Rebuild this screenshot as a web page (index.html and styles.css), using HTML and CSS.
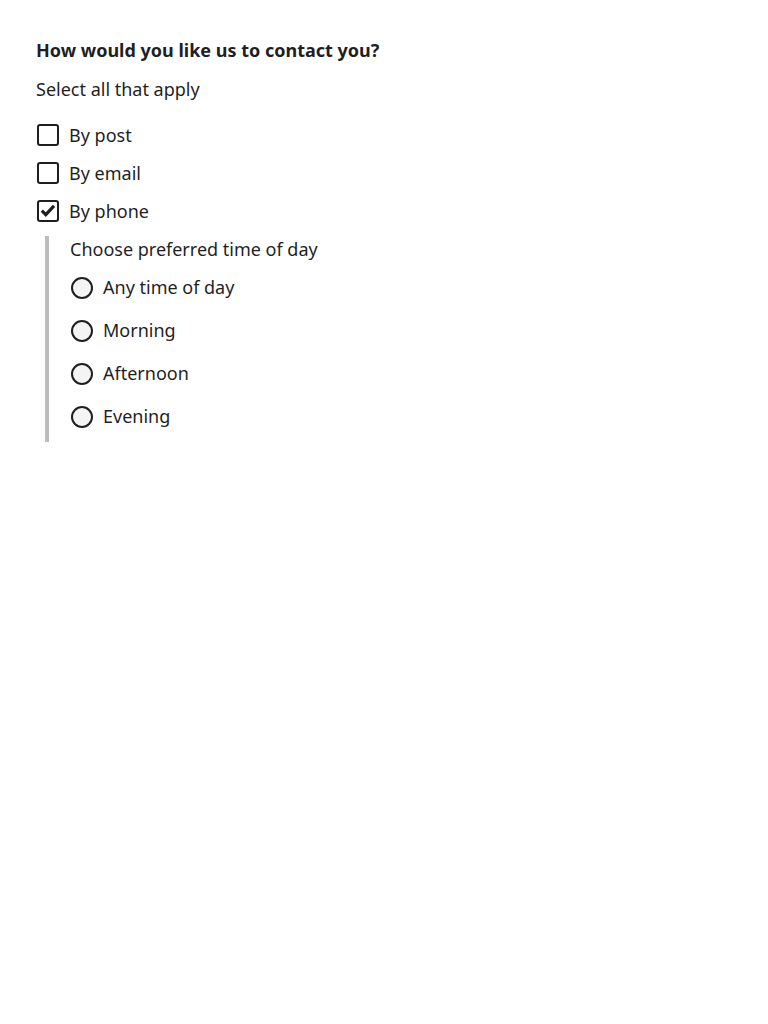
FILE: index.html
```html
<!DOCTYPE html>
<html lang="en">
<head>
<meta charset="utf-8">
<title>Contact preferences</title>
<link rel="stylesheet" href="styles.css">
</head>
<body>
<form class="form">
  <fieldset class="group">
    <legend class="title">How would you like us to contact you?</legend>
    <p class="hint">Select all that apply</p>
    <div class="options">
      <label class="option">
        <span class="box"></span>
        <span class="label">By post</span>
      </label>
      <label class="option">
        <span class="box"></span>
        <span class="label">By email</span>
      </label>
      <label class="option">
        <span class="box checked">
          <svg viewBox="0 0 22 22" width="22" height="22" aria-hidden="true"><path d="M4.8 10.6 L8.8 14.6 L17 5.8" fill="none" stroke="#1f1f1f" stroke-width="3.2" stroke-linecap="butt" stroke-linejoin="miter"/></svg>
        </span>
        <span class="label">By phone</span>
      </label>
    </div>
    <div class="nested">
      <p class="nested-title">Choose preferred time of day</p>
      <div class="radios">
        <label class="radio"><span class="circle"></span><span class="label">Any time of day</span></label>
        <label class="radio"><span class="circle"></span><span class="label">Morning</span></label>
        <label class="radio"><span class="circle"></span><span class="label">Afternoon</span></label>
        <label class="radio"><span class="circle"></span><span class="label">Evening</span></label>
      </div>
    </div>
  </fieldset>
</form>
</body>
</html>
```

FILE: styles.css
```css
html, body {
  margin: 0;
  background: #ffffff;
}

body {
  font-family: "Noto Sans", "Open Sans", sans-serif;
  color: #1f1f1f;
  font-size: 18px;
  line-height: 27px;
}

.form {
  padding: 37px 36px 36px;
}

.group {
  border: 0;
  margin: 0;
  padding: 0;
  min-width: 0;
}

.title {
  padding: 0;
  font-weight: 700;
  font-size: 18px;
  line-height: 27px;
}

.hint {
  margin: 12px 0 0;
}

.options {
  display: flex;
  flex-direction: column;
  margin-top: 13px;
}

.option {
  display: flex;
  align-items: center;
  gap: 10px;
  height: 38px;
  margin-left: 1px;
}

.box {
  box-sizing: border-box;
  width: 22px;
  height: 22px;
  border: 2px solid #1f1f1f;
  border-radius: 3px;
  display: flex;
  align-items: center;
  justify-content: center;
  flex-shrink: 0;
}

.box svg {
  display: block;
  margin: -2px;
}

.nested {
  margin: 6px 0 0 9px;
  border-left: 4px solid #bdbdbd;
  padding: 0 0 4px 21px;
}

.nested-title {
  margin: 0;
}

.radios {
  display: flex;
  flex-direction: column;
  margin-top: 3px;
}

.radio {
  display: flex;
  align-items: center;
  gap: 10px;
  height: 43px;
  margin-left: 1px;
}

.circle {
  box-sizing: border-box;
  width: 22px;
  height: 22px;
  border: 2px solid #1f1f1f;
  border-radius: 50%;
  background: #f4f4f4;
  flex-shrink: 0;
}
```
